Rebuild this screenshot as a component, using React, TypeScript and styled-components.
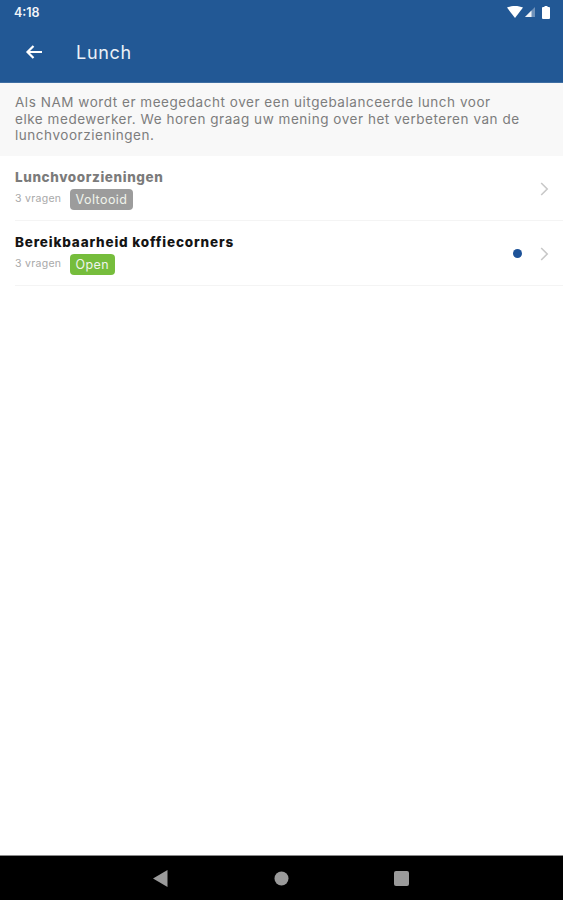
import styled, { createGlobalStyle } from "styled-components";

const GlobalStyle = createGlobalStyle`
  html, body {
    margin: 0;
    padding: 0;
    background: #ffffff;
    font-family: Inter, "Liberation Sans", sans-serif;
  }
`;

const surveys = [
  { title: "Lunchvoorzieningen", status: "Voltooid", done: true },
  { title: "Bereikbaarheid koffiecorners", status: "Open", done: false },
];

export default function App() {
  return (
    <Page>
      <GlobalStyle />
      <Header>
        <StatusBar>
          <Clock>4:18</Clock>
          <StatusIcons>
            <svg width="16" height="12" viewBox="0 0 16 12">
              <path d="M0 1.600C2.200.5 5 0 8 0s5.800.5 8 1.600L8 12z" fill="#fff" />
            </svg>
            <svg width="12" height="12" viewBox="0 0 12 12">
              <path d="M11 1v10H1z" fill="#fff" fillOpacity="0.35" />
              <path d="M7.500 4.500V11H1z" fill="#fff" fillOpacity="0.9" />
            </svg>
            <Battery width="8" height="13" viewBox="0 0 8 13">
              <path d="M2.500 0h3v1H7a1 1 0 0 1 1 1v10a1 1 0 0 1-1 1H1a1 1 0 0 1-1-1V2a1 1 0 0 1 1-1h1.500z" fill="#fff" />
            </Battery>
          </StatusIcons>
        </StatusBar>
        <TitleBar>
          <svg width="18" height="16" viewBox="0 0 18 16">
            <path d="M17 8H3M8.500 2 2.500 8l6 6" fill="none" stroke="#fff" strokeWidth="2.200" />
          </svg>
          <Title>Lunch</Title>
        </TitleBar>
      </Header>
      <Intro>
        Als NAM wordt er meegedacht over een uitgebalanceerde lunch voor
        <br />
        elke medewerker. We horen graag uw mening over het verbeteren van de
        <br />
        lunchvoorzieningen.
      </Intro>
      <List>
        {surveys.map((survey) => (
          <Row key={survey.title}>
            <RowText>
              <RowTitle $done={survey.done}>{survey.title}</RowTitle>
              <RowMeta>
                <Count>3 vragen</Count>
                <Badge $done={survey.done}>{survey.status}</Badge>
              </RowMeta>
            </RowText>
            {!survey.done && <Dot />}
            <svg width="9" height="14" viewBox="0 0 9 14">
              <path d="M1.200 1 7.200 7l-6 6" fill="none" stroke="#c8c8c8" strokeWidth="1.600" />
            </svg>
          </Row>
        ))}
      </List>
      <NavBar>
        <svg width="15" height="17" viewBox="0 0 15 17">
          <path d="M14.500 0v17L0 8.500z" fill="#9a9a9a" />
        </svg>
        <svg width="15" height="15" viewBox="0 0 15 15">
          <circle cx="7.500" cy="7.500" r="7" fill="#9a9a9a" />
        </svg>
        <svg width="15" height="15" viewBox="0 0 15 15">
          <rect width="15" height="15" rx="2" fill="#9a9a9a" />
        </svg>
      </NavBar>
    </Page>
  );
}

const Page = styled.div`
  width: 563px;
  height: 900px;
  display: flex;
  flex-direction: column;
  overflow: hidden;
`;

const Header = styled.header`
  height: 82px;
  flex: none;
  display: flex;
  flex-direction: column;
  background: #225895;
  border-bottom: 1px solid #3f6ea3;
`;

const StatusBar = styled.div`
  height: 24px;
  padding: 0 13px 0 14px;
  display: flex;
  align-items: center;
  justify-content: space-between;
`;

const Clock = styled.span`
  color: #f2f5f9;
  font-size: 12.500px;
  font-weight: 600;
`;

const StatusIcons = styled.div`
  display: flex;
  align-items: center;
  gap: 1px;
`;

const Battery = styled.svg`
  margin-left: 5px;
`;

const TitleBar = styled.div`
  flex: 1;
  padding: 0 0 2px 25px;
  display: flex;
  align-items: center;
  gap: 33px;
`;

const Title = styled.h1`
  margin: 0;
  color: #eaf0f7;
  font-size: 18px;
  font-weight: 400;
  letter-spacing: 0.7px;
`;

const Intro = styled.p`
  height: 73px;
  box-sizing: border-box;
  flex: none;
  margin: 0;
  padding: 11px 15px 0;
  background: #f8f8f8;
  color: #7d7d7d;
  font-size: 13.500px;
  line-height: 16.500px;
  letter-spacing: 0.54px;
  white-space: nowrap;
`;

const List = styled.div`
  flex: 1;
  background: #ffffff;
`;

const Row = styled.div`
  height: 65px;
  box-sizing: border-box;
  margin-left: 15px;
  padding: 1px 14px 0 0;
  display: flex;
  align-items: center;
  border-bottom: 1px solid #f4f4f4;
`;

const RowText = styled.div`
  flex: 1;
  margin-top: 2px;
  display: flex;
  flex-direction: column;
  gap: 3px;
`;

const RowTitle = styled.div<{ $done: boolean }>`
  color: ${({ $done }) => ($done ? "#7b7b7b" : "#141414")};
  font-size: 13.500px;
  font-weight: 800;
  line-height: 17px;
  letter-spacing: ${({ $done }) => ($done ? "0.6px" : "0.83px")};
`;

const RowMeta = styled.div`
  display: flex;
  align-items: center;
  gap: 7px;
`;

const Count = styled.span`
  width: 48px;
  margin-top: -2px;
  color: #a8a8a8;
  font-size: 10.500px;
  letter-spacing: 0.3px;
`;

const Badge = styled.span<{ $done: boolean }>`
  height: 21px;
  padding: 0 5.500px;
  display: flex;
  align-items: center;
  border-radius: 4px;
  background: ${({ $done }) => ($done ? "#9c9c9c" : "#76bd3c")};
  color: #f0f4ec;
  font-size: 12.500px;
  font-weight: 400;
  letter-spacing: 0.45px;
`;

const Dot = styled.span`
  width: 9px;
  height: 9px;
  margin-right: 18.500px;
  border-radius: 50%;
  background: #1d5298;
`;

const NavBar = styled.nav`
  height: 45px;
  flex: none;
  padding: 0 154px 0 153px;
  display: flex;
  align-items: center;
  justify-content: space-between;
  background: #000000;
  border-top: 1px solid #8a8a8a;
  box-sizing: border-box;
`;
